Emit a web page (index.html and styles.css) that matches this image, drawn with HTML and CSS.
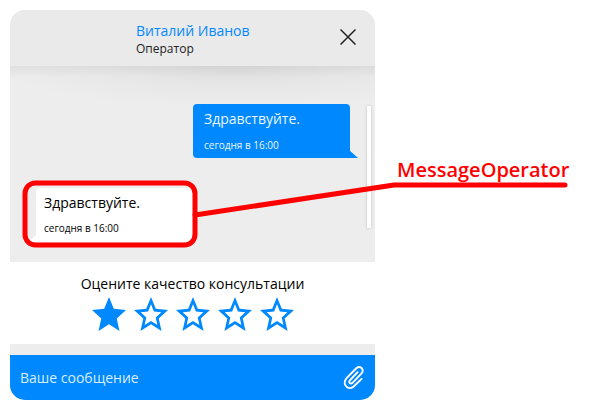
FILE: index.html
```html
<!DOCTYPE html>
<html lang="ru">
<head>
<meta charset="utf-8">
<title>MessageOperator</title>
<link rel="stylesheet" href="styles.css">
</head>
<body>
<svg class="defs" width="0" height="0">
  <symbol id="star" viewBox="2 2 20 19" preserveAspectRatio="none"><path d="M22 9.24l-7.19-.62L12 2 9.19 8.63 2 9.24l5.46 4.73L5.82 21 12 17.27 18.18 21l-1.63-7.03z"/></symbol>
  <symbol id="star-outline" viewBox="2 2 20 19" preserveAspectRatio="none"><path d="M22 9.24l-7.19-.62L12 2 9.19 8.63 2 9.24l5.46 4.73L5.82 21 12 17.27 18.18 21l-1.63-7.03L22 9.24zM12 15.4l-3.76 2.27 1-4.28-3.32-2.88 4.38-.38L12 6.1l1.71 4.04 4.38.38-3.32 2.88 1 4.28L12 15.4z"/></symbol>
</svg>
<main class="chat">
  <header class="header">
    <div class="person">
      <div class="name">Виталий Иванов</div>
      <div class="role">Оператор</div>
    </div>
    <svg class="close" width="16" height="16" viewBox="0 0 16 16"><path d="M.5.5l15 15M15.500.5l-15 15"/></svg>
  </header>
  <section class="messages">
    <div class="message client">
      <div class="text">Здравствуйте.</div>
      <div class="time">сегодня в 16:00</div>
      <svg class="tail" width="9" height="8" viewBox="0 0 9 8"><path d="M0 0L9 8H0z"/></svg>
    </div>
    <div class="message operator">
      <div class="text">Здравствуйте.</div>
      <div class="time">сегодня в 16:00</div>
      <svg class="tail" width="9" height="8" viewBox="0 0 9 8"><path d="M9 0L0 8H9z"/></svg>
    </div>
    <div class="scrollbar"></div>
  </section>
  <section class="rating">
    <div class="question">Оцените качество консультации</div>
    <div class="stars">
      <svg><use href="#star"/></svg>
      <svg><use href="#star-outline"/></svg>
      <svg><use href="#star-outline"/></svg>
      <svg><use href="#star-outline"/></svg>
      <svg><use href="#star-outline"/></svg>
    </div>
  </section>
  <footer class="footer">
    <span class="placeholder">Ваше сообщение</span>
    <svg class="clip" width="22" height="25" viewBox="0 0 22 25"><path d="M14.600 7.200L7.100 15.200C5 17.700 7.700 19.600 9.500 17.800L18.300 8.700C21.800 5 17.500-.4 13.300 3.300L3.600 13.200C-1.800 19.200 5.500 26.300 11 21.300L18.600 13.900"/></svg>
  </footer>
</main>
<svg class="callout-lines" width="600" height="410" viewBox="0 0 600 410">
  <rect x="25" y="183" width="170" height="62" rx="10.500"/>
  <path d="M195 215L394 185H565"/>
</svg>
<div class="callout-label">MessageOperator</div>
</body>
</html>
```
FILE: styles.css
```css
* { box-sizing: border-box; }
body {
  margin: 0;
  padding: 10px;
  background: #fff;
  font-family: "Open Sans", sans-serif;
  color: #000;
}
.defs { position: absolute; }
.chat {
  width: 365px;
  height: 390px;
  display: flex;
  flex-direction: column;
  border-radius: 15px;
  overflow: hidden;
  background: #ededed;
}
.header {
  height: 56px;
  flex: none;
  display: flex;
  justify-content: space-between;
  background: #eaeaea;
  padding: 11px 19px 0 126px;
}
.name { color: #0089ff; font-size: 14px; line-height: 20px; white-space: nowrap; }
.role { color: #222; font-size: 12px; line-height: 16px; }
.close { margin-top: 8px; fill: none; stroke: #222; stroke-width: 1.5; }
.messages {
  position: relative;
  height: 196px;
  flex: none;
  display: flex;
  flex-direction: column;
  gap: 30px;
  padding: 38px 25px 0 26px;
  background:
    linear-gradient(rgba(0, 0, 0, .05), rgba(0, 0, 0, 0) 12px),
    radial-gradient(ellipse 240px 42px at 62% 0, #dedede, #e6e6e6 45%, #ededed);
}
.message { position: relative; width: 157px; height: 54px; border-radius: 4px; }
.client {
  align-self: flex-end;
  border-bottom-right-radius: 0;
  background: #0089ff;
  color: #eaf5ff;
  padding: 5px 11px;
}
.operator {
  align-self: flex-start;
  border-bottom-left-radius: 0;
  background: #fff;
  padding: 5px 8px;
}
.text { font-size: 14px; line-height: 20px; white-space: nowrap; }
.time { font-size: 10px; line-height: 14px; margin-top: 9px; white-space: nowrap; }
.operator .time { margin-top: 8px; }
.tail { position: absolute; bottom: 0; }
.client .tail { left: calc(100% - 1px); fill: #0089ff; }
.operator .tail { right: calc(100% - 1px); fill: #fff; }
.scrollbar {
  position: absolute;
  top: 40px;
  right: 4px;
  width: 4px;
  height: 122px;
  background: #fff;
  box-shadow: 0 0 3px rgba(0, 0, 0, .2);
}
.rating {
  height: 82px;
  flex: none;
  display: flex;
  flex-direction: column;
  align-items: center;
  background: #fff;
  padding-top: 12px;
}
.question { font-size: 14px; line-height: 20px; white-space: nowrap; }
.stars { display: flex; gap: 8px; margin-top: 3px; }
.stars svg { width: 34px; height: 34px; fill: #0089ff; }
.footer {
  height: 45px;
  margin-top: auto;
  display: flex;
  align-items: center;
  justify-content: space-between;
  background: #0089ff;
  color: #d9edff;
  padding: 0 10px;
}
.placeholder { font-size: 14px; line-height: 20px; }
.clip { fill: none; stroke: #fff; stroke-width: 1.9; stroke-linecap: round; }
.callout-lines {
  position: absolute;
  left: 0;
  top: 0;
  fill: none;
  stroke: #f00;
  stroke-width: 5;
  stroke-linecap: round;
  stroke-linejoin: round;
}
.callout-label {
  position: absolute;
  left: 397px;
  top: 156px;
  color: #f00;
  font-size: 20px;
  font-weight: 600;
  line-height: 27px;
}
```
